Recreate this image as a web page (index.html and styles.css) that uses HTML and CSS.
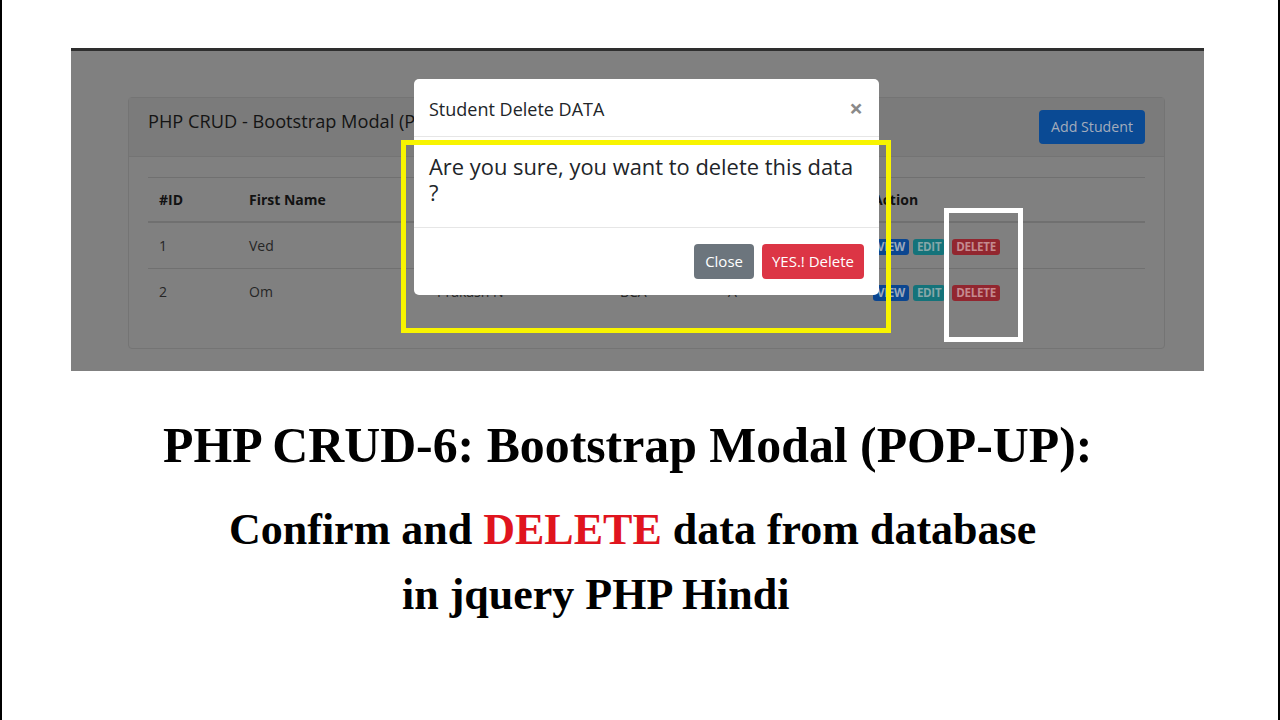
FILE: index.html
```html
<!DOCTYPE html>
<html lang="en">
<head>
<meta charset="utf-8">
<title>PHP CRUD-6: Bootstrap Modal</title>
<link rel="stylesheet" href="styles.css">
</head>
<body>
<div class="frame">
  <div class="shot">
    <div class="card">
      <div class="card-header">
        <span class="card-title">PHP CRUD - Bootstrap Modal (POP UP)</span>
        <span class="btn-add">Add Student</span>
      </div>
      <div class="card-body">
        <table class="tbl">
          <colgroup>
            <col class="c1"><col class="c2"><col class="c3"><col class="c4"><col class="c5"><col class="c6">
          </colgroup>
          <thead>
            <tr><th>#ID</th><th>First Name</th><th></th><th></th><th></th><th>Action</th></tr>
          </thead>
          <tbody>
            <tr><td>1</td><td>Ved</td><td></td><td></td><td></td>
              <td><span class="badge b-view">VIEW</span><span class="badge b-edit">EDIT</span><span class="badge b-del">DELETE</span></td></tr>
            <tr><td>2</td><td>Om</td><td>Prakash N</td><td>BCA</td><td>A</td>
              <td><span class="badge b-view">VIEW</span><span class="badge b-edit">EDIT</span><span class="badge b-del">DELETE</span></td></tr>
          </tbody>
        </table>
      </div>
    </div>

    <div class="modal">
      <div class="modal-header">
        <span class="modal-title">Student Delete DATA</span>
        <span class="modal-close">&times;</span>
      </div>
      <div class="modal-body">Are you sure, you want to delete this data<br>?</div>
      <div class="modal-footer">
        <span class="btn btn-close">Close</span>
        <span class="btn btn-del">YES.! Delete</span>
      </div>
    </div>

    <div class="hl-yellow"></div>
    <div class="hl-white"></div>
  </div>

  <div class="titles">
    <div class="t1">PHP CRUD-6: Bootstrap Modal (POP-UP):</div>
    <div class="t2">Confirm and <span class="red">DELETE</span> data from database</div>
    <div class="t3">in jquery PHP Hindi</div>
  </div>
</div>
</body>
</html>
```

FILE: styles.css
```css
html, body {
  margin: 0;
  padding: 0;
  background: #fff;
}

.frame {
  width: 1280px;
  height: 720px;
  box-sizing: border-box;
  border-left: 2px solid #000;
  border-right: 2px solid #000;
  background: #fff;
  overflow: hidden;
}

.shot {
  position: relative;
  margin: 48px 0 0 69px;
  width: 1133px;
  height: 323px;
  box-sizing: border-box;
  border-top: 3px solid #2e2e2e;
  background: #808080;
  font-family: "Open Sans", "Noto Sans", sans-serif;
  overflow: hidden;
}

.card {
  margin: 46px 0 0 57px;
  width: 1037px;
  height: 252px;
  box-sizing: border-box;
  border: 1px solid #747474;
  border-radius: 4px;
}

.card-header {
  height: 59px;
  box-sizing: border-box;
  border-bottom: 1px solid #747474;
  background: #7b7b7b;
  display: flex;
  align-items: center;
  justify-content: space-between;
  padding: 0 19px;
}

.card-title {
  font-size: 18.2px;
  color: #141414;
  margin-bottom: 12px;
  white-space: nowrap;
  max-width: 266px;
  overflow: hidden;
}

.btn-add {
  background: #0a4a94;
  color: #a3acbb;
  font-size: 14.2px;
  height: 34px;
  line-height: 34px;
  padding: 0 12px;
  border-radius: 4px;
}

.card-body {
  padding: 20px 19px;
}

.tbl {
  width: 997px;
  border-collapse: collapse;
  table-layout: fixed;
  font-size: 14px;
  color: #262626;
}

.c1 { width: 89px; }
.c2 { width: 188px; }
.c3 { width: 183px; }
.c4 { width: 108px; }
.c5 { width: 145px; }
.c6 { width: auto; }

.tbl th {
  text-align: left;
  font-weight: 700;
  color: #121212;
  height: 43px;
  padding: 0 11px 0 12px;
  border-top: 1px solid #707070;
  border-bottom: 2px solid #707070;
}

.tbl th:first-child,
.tbl td:first-child {
  padding-left: 11px;
}

.tbl td {
  height: 45px;
  padding: 0 11px 0 12px;
  border-bottom: 1px solid #707070;
  vertical-align: middle;
}

.tbl tbody tr:last-child td {
  border-bottom: none;
}

.badge {
  display: inline-block;
  font-size: 11.6px;
  font-weight: 700;
  letter-spacing: -0.3px;
  height: 16px;
  line-height: 16px;
  padding: 0 4px;
  border-radius: 3px;
  vertical-align: middle;
}

.b-view { background: #0b4690; color: #9aa8bc; margin-right: 4px; }
.b-edit { background: #14737a; color: #86a6a8; margin-right: 7px; }
.b-del { background: #92262f; color: #c48a8f; }

.modal {
  position: absolute;
  left: 343px;
  top: 28px;
  width: 465px;
  height: 216px;
  background: #fff;
  border-radius: 5px;
  color: #212529;
  font-family: "Open Sans", "Noto Sans", sans-serif;
}

.modal-header {
  height: 58px;
  box-sizing: border-box;
  border-bottom: 1px solid #e6e6e6;
  display: flex;
  align-items: center;
  justify-content: space-between;
  padding: 0 15px;
}

.modal-title {
  font-size: 18px;
  margin-top: 2px;
}

.modal-close {
  font-size: 24px;
  font-weight: 700;
  color: #8a8a8a;
  line-height: 1;
  margin-right: 1px;
}

.modal-body {
  height: 91px;
  box-sizing: border-box;
  padding: 17px 15px 0;
  font-size: 21.9px;
  line-height: 26px;
  border-bottom: 1px solid #e6e6e6;
}

.modal-footer {
  display: flex;
  justify-content: flex-end;
  gap: 8px;
  padding: 16px 15px 0;
}

.btn {
  height: 35px;
  line-height: 35px;
  padding: 0 11px;
  border-radius: 4px;
  color: #fff;
  font-size: 15px;
}

.btn-close { background: #6c757d; }
.btn-del { background: #dc3545; padding: 0 10px; }

.hl-yellow {
  position: absolute;
  left: 330px;
  top: 89px;
  width: 490px;
  height: 193px;
  box-sizing: border-box;
  border: 5px solid #f8f400;
}

.hl-white {
  position: absolute;
  left: 873px;
  top: 157px;
  width: 79px;
  height: 134px;
  box-sizing: border-box;
  border: 5px solid #fff;
}

.titles {
  font-family: "Liberation Serif", "Times New Roman", serif;
  font-weight: 700;
  color: #000;
}

.t1 {
  font-size: 49.8px;
  line-height: 56px;
  margin: 47px 0 0 161px;
  white-space: nowrap;
}

.t2 {
  font-size: 44px;
  line-height: 50px;
  margin: 31px 0 0 227px;
  white-space: nowrap;
}

.t3 {
  font-size: 44px;
  line-height: 50px;
  margin: 15px 0 0 400px;
  white-space: nowrap;
}

.red {
  color: #e0141e;
}
```
